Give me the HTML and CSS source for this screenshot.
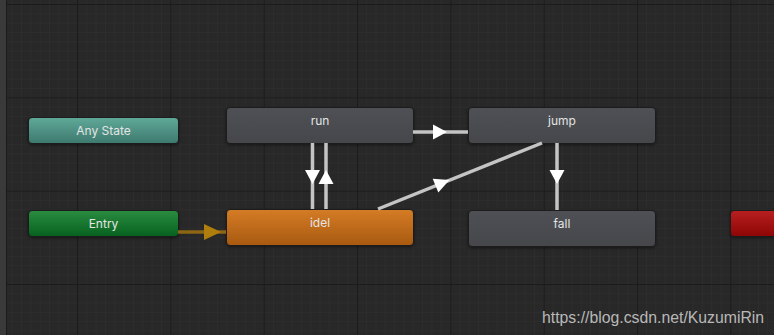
FILE: index.html
```html
<!DOCTYPE html>
<html lang="en">
<head>
    <meta charset="UTF-8">
    <title>Animator</title>
    <link rel="stylesheet" href="styles.css">
</head>
<body>
    <div class="window">
        <div class="side-edge"></div>
        <div class="graph">
            <!-- transitions -->
            <svg class="links" width="774" height="335" viewBox="0 0 774 335">
                <line class="entry-link" x1="178" y1="232" x2="226" y2="232"/>
                <polygon class="entry-arrow" points="221,232 204,224 204,240"/>

                <line class="link" x1="312.5" y1="143" x2="312.5" y2="209"/>
                <line class="link" x1="326" y1="143" x2="326" y2="209"/>
                <line class="link" x1="413" y1="132" x2="468" y2="132"/>
                <line class="link" x1="378" y1="209" x2="542" y2="143"/>
                <line class="link" x1="557" y1="143" x2="557" y2="210"/>

                <polygon class="arrow" points="312.5,184 305,170 320,170"/>
                <polygon class="arrow" points="326,170 318.5,184 333.5,184"/>
                <polygon class="arrow" points="447,132 433,124.5 433,139.5"/>
                <polygon class="arrow" points="8,0 -7,-7.5 -7,7.5" transform="translate(442 183) rotate(-21.9)"/>
                <polygon class="arrow" points="557,184 549.5,170 564.5,170"/>
            </svg>

            <div class="node small any-state" style="left: 28px; top: 117px;">Any State</div>
            <div class="node small entry" style="left: 28px; top: 210px;">Entry</div>
            <div class="node small exit" style="left: 730px; top: 210px;"></div>

            <div class="node state" style="left: 226px; top: 107px;">run</div>
            <div class="node state default" style="left: 226px; top: 209px;">idel</div>
            <div class="node state" style="left: 468px; top: 107px;">jump</div>
            <div class="node state" style="left: 468px; top: 210px;">fall</div>

            <div class="watermark">https://blog.csdn.net/KuzumiRin</div>
        </div>
    </div>
</body>
</html>
```

FILE: styles.css
```css
html, body {
    margin: 0;
    padding: 0;
    background-color: #272727;
}
.window {
    display: flex;
    width: 774px;
    height: 335px;
    overflow: hidden;
}
.side-edge {
    position: relative;
    z-index: 5;
    width: 6px;
    flex-shrink: 0;
    background-color: #3a3a3a;
    border-right: 1px solid #1a1a1a;
}
.graph {
    position: relative;
    flex: 1;
    margin-left: -7px;
    background-color: #282828;
    background-image:
        linear-gradient(to right, #1b1b1b 1px, transparent 1px),
        linear-gradient(to bottom, #1b1b1b 1px, transparent 1px),
        linear-gradient(to right, #2d2d2d 1px, transparent 1px),
        linear-gradient(to bottom, #2d2d2d 1px, transparent 1px);
    background-size:
        93.333px 93.333px,
        93.333px 93.333px,
        9.333px 9.333px,
        9.333px 9.333px;
    background-position: 77px 4px, 77px 4px, 77px 4px, 77px 4px;
}
.links {
    position: absolute;
    left: 0;
    top: 0;
    z-index: 2;
}
.link {
    stroke: #c4c4c4;
    stroke-width: 3.5;
}
.arrow {
    fill: #ffffff;
}
.entry-link {
    stroke: #8c6612;
    stroke-width: 3.5;
}
.entry-arrow {
    fill: #b07e0d;
}
.node {
    position: absolute;
    z-index: 1;
    box-sizing: border-box;
    border-radius: 4px;
    border: 1px solid #1c1c1c;
    box-shadow: 0 1px 3px rgba(0,0,0,0.5);
    font-family: Inter, "Noto Sans", sans-serif;
    font-size: 12px;
    color: #e4e4e4;
    text-align: center;
}
.small {
    width: 151px;
    height: 27px;
    line-height: 25px;
}
.state {
    width: 188px;
    height: 37px;
    padding-top: 6px;
    line-height: 14px;
    background: linear-gradient(#4e5055, #45474b);
}
.any-state {
    background: linear-gradient(#5fa898, #3e7a6f);
}
.entry {
    background: linear-gradient(#2a8b40, #07621f);
}
.exit {
    width: 80px;
    background: linear-gradient(#b71f1f, #8e0606);
}
.default {
    background: linear-gradient(#d47b25, #a85a10);
}
.watermark {
    position: absolute;
    z-index: 3;
    left: 542px;
    top: 308px;
    font-family: "Liberation Sans", Arial, sans-serif;
    font-size: 15.8px;
    line-height: 20px;
    color: #b8b8b8;
    white-space: nowrap;
}
```
